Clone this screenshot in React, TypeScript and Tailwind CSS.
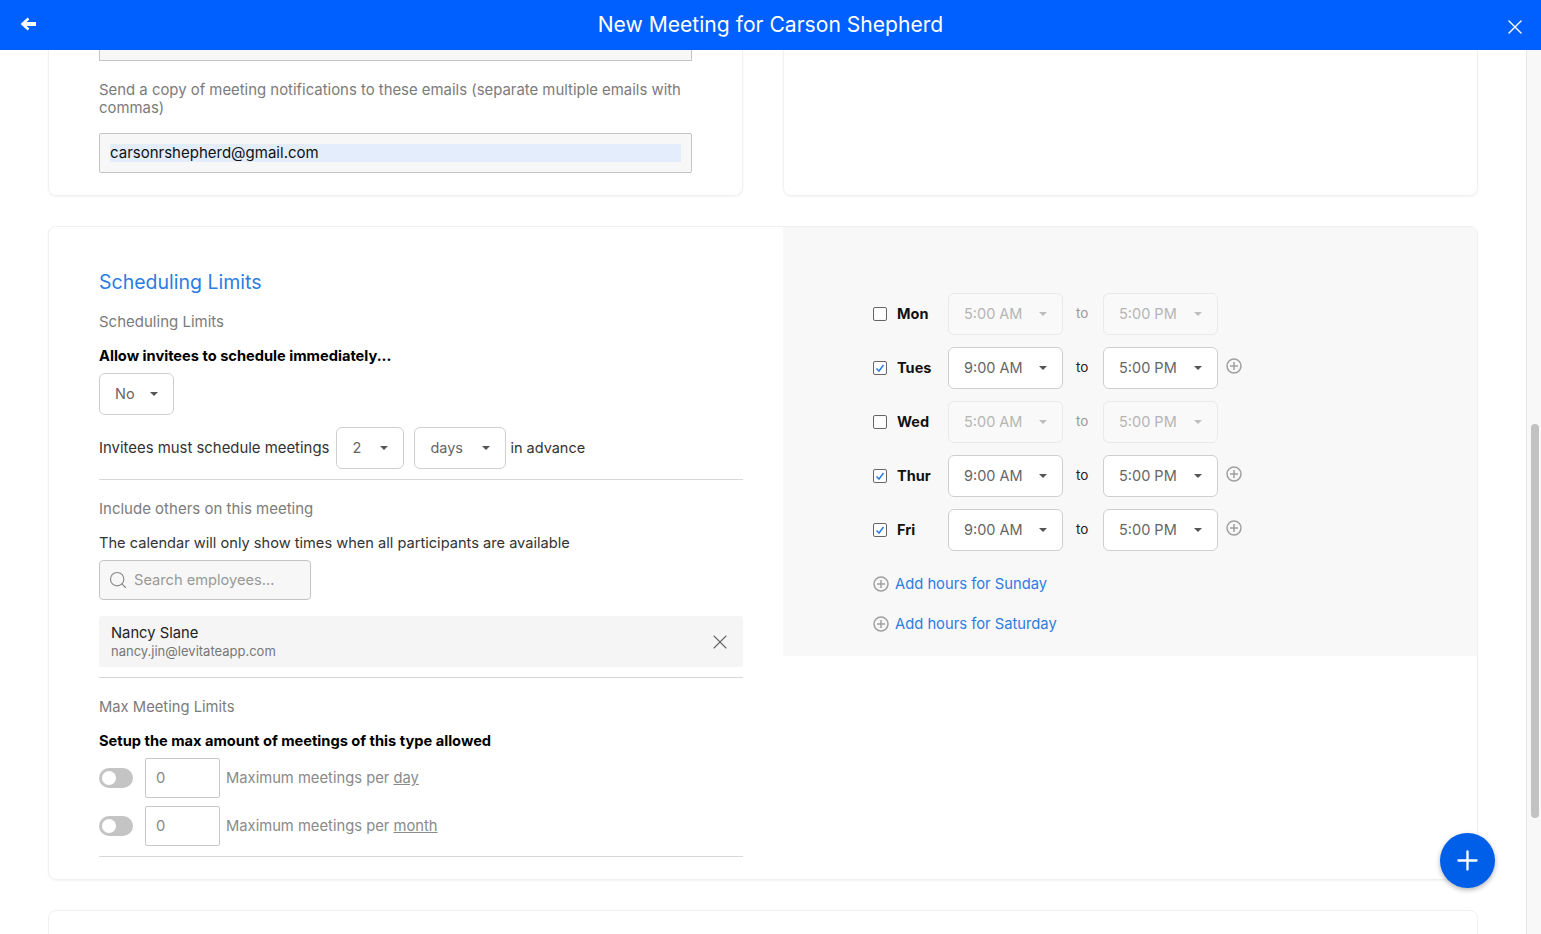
import { Plus, Search, X } from "lucide-react"

const Caret = ({ faded }: { faded?: boolean }) => (
  <span className={`h-0 w-0 border-x-[4px] border-t-[4px] border-x-transparent ${faded ? "border-t-[#bdbdbd]" : "border-t-[#555]"}`} />
)

const Select = ({ value, width, faded }: { value: string; width: string; faded?: boolean }) => (
  <div
    className={`flex h-[42px] shrink-0 items-center justify-between rounded-md border pl-[15px] pr-[15px] text-[14.5px] ${width} ${
      faded ? "border-[#e9e9e9] bg-[#f9f9f9] text-[#b5b5b5]" : "border-[#cfcfcf] bg-white text-[#666]"
    }`}
  >
    <span>{value}</span>
    <Caret faded={faded} />
  </div>
)

const PlusCircle = () => (
  <svg width="16" height="16" viewBox="0 0 16 16" fill="none" stroke="#a0a0a0" strokeWidth="1.5" className="shrink-0">
    <circle cx="8" cy="8" r="7" />
    <path d="M8 4v8M4 8h8" />
  </svg>
)

const Check = ({ on }: { on: boolean }) => (
  <span className="flex h-[14px] w-[14px] shrink-0 items-center justify-center rounded-[2px] border border-[#666] bg-white">
    {on && (
      <svg width="10" height="10" viewBox="0 0 10 10" fill="none" stroke="#2b7de0" strokeWidth="1.5">
        <path d="M1.5 5.5 4 8l4.5-6" />
      </svg>
    )}
  </span>
)

const days = [
  { name: "Mon", on: false },
  { name: "Tues", on: true },
  { name: "Wed", on: false },
  { name: "Thur", on: true },
  { name: "Fri", on: true },
]

const Toggle = () => (
  <span className="flex h-[20px] w-[34px] shrink-0 items-center rounded-full bg-[#c4c4c4] pl-[3px]">
    <span className="h-[14px] w-[14px] rounded-full bg-white" />
  </span>
)

const LimitRow = ({ period, className }: { period: string; className: string }) => (
  <div className={`flex items-center ${className}`}>
    <Toggle />
    <div className="ml-[12px] flex h-10 w-[75px] items-center rounded-[2px] border border-[#c8c8c8] pl-[10px] text-[#888]">0</div>
    <span className="ml-[6px] text-[#8a8a8a]">
      Maximum meetings per <span className="underline">{period}</span>
    </span>
  </div>
)

export default function App() {
  return (
    <div className="relative flex h-[934px] flex-col overflow-hidden bg-white font-['Inter',sans-serif] text-[14.75px] leading-[18px] text-[#111]">
      <header className="relative flex h-[50px] shrink-0 items-center justify-center bg-[#005fff] text-white">
        <svg width="16" height="14" viewBox="0 0 16 14" fill="white" className="absolute left-[20px] top-[17px]">
          <path d="M7.6 0.6 9.4 2.4 6.6 5H16v4H6.6l2.8 2.6-1.8 1.8L0.6 7z" />
        </svg>
        <h1 className="text-[21.1px] font-normal">New Meeting for Carson Shepherd</h1>
        <X size={24} strokeWidth={1.4} className="absolute right-[14px] top-[15px]" />
      </header>

      <div className="flex min-h-0 flex-1">
        <main className="min-w-0 flex-1 pl-[48px] pr-[48px]">
          <div className="flex gap-[40px]">
            <section className="w-[695px] rounded-b-lg border-x border-b border-[#f0f0f0] pb-[22px] pl-[50px] pr-[50px] shadow-[0_1px_2px_rgba(0,0,0,0.05)]">
              <div className="h-[11px] border-x border-b border-[#c4c4c4] bg-[#f7f7f7]" />
              <p className="mt-[20px] text-[14.9px] text-[#7b7b7b]">
                Send a copy of meeting notifications to these emails (separate multiple emails with commas)
              </p>
              <div className="mt-[16px] flex h-10 items-center rounded-[2px] border border-[#c4c4c4] bg-[#f7f7f7] px-[10px]">
                <div className="w-full bg-[#e4edfb] text-[15px] text-[#111]">carsonrshepherd@gmail.com</div>
              </div>
            </section>
            <section className="flex-1 rounded-b-lg border-x border-b border-[#f0f0f0] shadow-[0_1px_2px_rgba(0,0,0,0.05)]" />
          </div>

          <section className="mt-[30px] flex rounded-lg border border-[#f0f0f0] shadow-[0_1px_2px_rgba(0,0,0,0.05)]">
            <div className="w-[694px] shrink-0 pb-[22px] pl-[50px] pt-[43px]">
              <h2 className="text-[19.5px] font-normal leading-6 text-[#2b7de0]">Scheduling Limits</h2>
              <p className="mt-[19px] text-[15px] text-[#7b7b7b]">Scheduling Limits</p>
              <p className="mt-4 text-[14.65px] font-bold text-black">Allow invitees to schedule immediately...</p>
              <div className="mt-2">
                <Select value="No" width="w-[75px]" />
              </div>
              <div className="mt-3 flex items-center text-[14.9px] text-[#333]">
                <span>Invitees must schedule meetings</span>
                <div className="ml-[7px]">
                  <Select value="2" width="w-[68px]" />
                </div>
                <div className="ml-[10px]">
                  <Select value="days" width="w-[92px]" />
                </div>
                <span className="ml-[4px] text-[14.5px]">in advance</span>
              </div>
              <hr className="mt-[10px] border-[#d8d8d8]" />
              <p className="mt-5 text-[15px] text-[#7b7b7b]">Include others on this meeting</p>
              <p className="mt-4 text-[14.62px] text-[#333]">The calendar will only show times when all participants are available</p>
              <div className="mt-2 flex h-10 w-[212px] items-center rounded-[4px] border border-[#c4c4c4] bg-[#f7f7f7] pl-[8px] text-[14.65px] text-[#999]">
                <Search size={20} strokeWidth={1.4} className="text-[#888]" />
                <span className="ml-[6px]">Search employees...</span>
              </div>
              <div className="mt-4 flex h-[51px] items-center justify-between rounded-[3px] bg-[#f5f5f5] pl-3 pr-[11px]">
                <div>
                  <div className="text-[#222]">Nancy Slane</div>
                  <div className="text-[13px] text-[#777]">nancy.jin@levitateapp.com</div>
                </div>
                <X size={24} strokeWidth={1.1} className="text-[#666]" />
              </div>
              <hr className="mt-[10px] border-[#d8d8d8]" />
              <p className="mt-5 text-[#7b7b7b]">Max Meeting Limits</p>
              <p className="mt-4 text-[14.65px] font-bold text-black">Setup the max amount of meetings of this type allowed</p>
              <LimitRow period="day" className="mt-2" />
              <LimitRow period="month" className="mt-2" />
              <hr className="mt-[10px] border-[#d8d8d8]" />
            </div>

            <div className="ml-[40px] flex-1 self-start rounded-tr-lg bg-[#f8f8f8] pb-[23px] pl-[90px] pt-[66px]">
              <div className="flex flex-col gap-3">
                {days.map((d) => (
                  <div key={d.name} className="flex h-[42px] items-center">
                    <Check on={d.on} />
                    <span className="ml-[10px] w-[51px] text-[14.5px] font-bold">{d.name}</span>
                    <Select value={d.on ? "9:00 AM" : "5:00 AM"} width="w-[115px]" faded={!d.on} />
                    <span className={`ml-[13px] -mt-[2px] w-[27px] text-[13.5px] ${d.on ? "text-[#222]" : "text-[#999]"}`}>to</span>
                    <Select value="5:00 PM" width="w-[115px]" faded={!d.on} />
                    {d.on && (
                      <span className="ml-2 -mt-[4px]">
                        <PlusCircle />
                      </span>
                    )}
                  </div>
                ))}
              </div>
              <div className="mt-6 flex items-center gap-[6px] text-[#2b7de0]">
                <PlusCircle />
                Add hours for Sunday
              </div>
              <div className="mt-[22px] flex items-center gap-[6px] text-[#2b7de0]">
                <PlusCircle />
                Add hours for Saturday
              </div>
            </div>
          </section>

          <section className="mt-[30px] h-40 rounded-lg border border-[#f0f0f0]" />
        </main>

        <aside className="w-[15px] shrink-0 border-l border-[#e6e6e6] bg-[#f8f8f8] pl-[4px] pt-[374px]">
          <div className="h-[394px] w-[8px] rounded-full bg-[#c2c2c2]" />
        </aside>
      </div>

      <button className="absolute left-[1440px] top-[833px] flex h-[55px] w-[55px] items-center justify-center rounded-full bg-[#005fe8] text-white shadow-[0_2px_5px_rgba(0,0,0,0.3)]">
        <Plus size={31} strokeWidth={1.8} />
      </button>
    </div>
  )
}
